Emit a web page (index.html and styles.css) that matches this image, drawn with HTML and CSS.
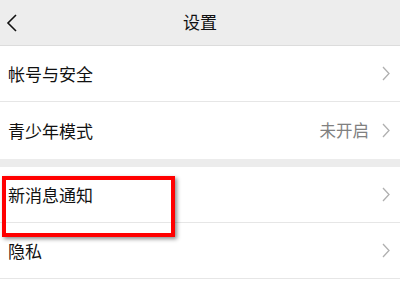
FILE: index.html
```html
<!DOCTYPE html>
<html lang="zh">
<head>
<meta charset="utf-8">
<link rel="stylesheet" href="styles.css">
</head>
<body>
<div class="page">
  <header class="bar">
    <svg class="back" width="12" height="20" viewBox="0 0 12 20"><path d="M10 2 L2 10 L10 18" fill="none" stroke="#111" stroke-width="1.6"/></svg>
    <div class="title">设置</div>
  </header>
  <div class="group">
    <div class="row"><span class="label">帐号与安全</span><svg class="chev" width="8" height="15" viewBox="0 0 8 15"><path d="M1 1 L7 7.5 L1 14" fill="none" stroke="#b0b0b0" stroke-width="1.3"/></svg></div>
    <div class="row tall"><span class="label">青少年模式</span><span class="value">未开启</span><svg class="chev" width="8" height="15" viewBox="0 0 8 15"><path d="M1 1 L7 7.5 L1 14" fill="none" stroke="#b0b0b0" stroke-width="1.3"/></svg></div>
  </div>
  <div class="group gap">
    <div class="row"><span class="label">新消息通知</span><svg class="chev" width="8" height="15" viewBox="0 0 8 15"><path d="M1 1 L7 7.5 L1 14" fill="none" stroke="#b0b0b0" stroke-width="1.3"/></svg></div>
    <div class="row"><span class="label">隐私</span><svg class="chev" width="8" height="15" viewBox="0 0 8 15"><path d="M1 1 L7 7.5 L1 14" fill="none" stroke="#b0b0b0" stroke-width="1.3"/></svg></div>
  </div>
  <div class="mark"></div>
</div>
</body>
</html>
```
FILE: styles.css
```css
html, body { margin: 0; padding: 0; }
body {
  width: 400px; height: 300px; overflow: hidden;
  background: #fff;
  font-family: "Noto Sans CJK SC", "Noto Sans", sans-serif;
  color: #111;
}
.page { position: relative; }
.bar {
  height: 45px; background: #ededed; border-bottom: 1px solid #dcdcdc;
  display: flex; align-items: center; justify-content: center; position: relative;
}
.back { position: absolute; left: 6px; top: 13px; }
.title { font-size: 17px; line-height: 1; margin-top: -2px; }
.group { background: #fff; }
.gap { border-top: 8px solid #ececec; }
.row {
  height: 56px; box-sizing: border-box;
  display: flex; align-items: center;
  padding: 0 10px 0 8px;
  border-bottom: 1px solid #e6e6e6;
}
.row.tall { height: 57px; border-bottom: none; }
.label { font-size: 17px; flex: 1; line-height: 1; }
.value { font-size: 16.5px; color: #808080; margin-right: 13px; line-height: 1; }
.chev { display: block; }
.mark {
  position: absolute; left: 2px; top: 176px; width: 165px; height: 53px;
  border: 4px solid #ff0000;
  box-shadow: 2px 2px 4px rgba(0,0,0,0.45);
}
```
